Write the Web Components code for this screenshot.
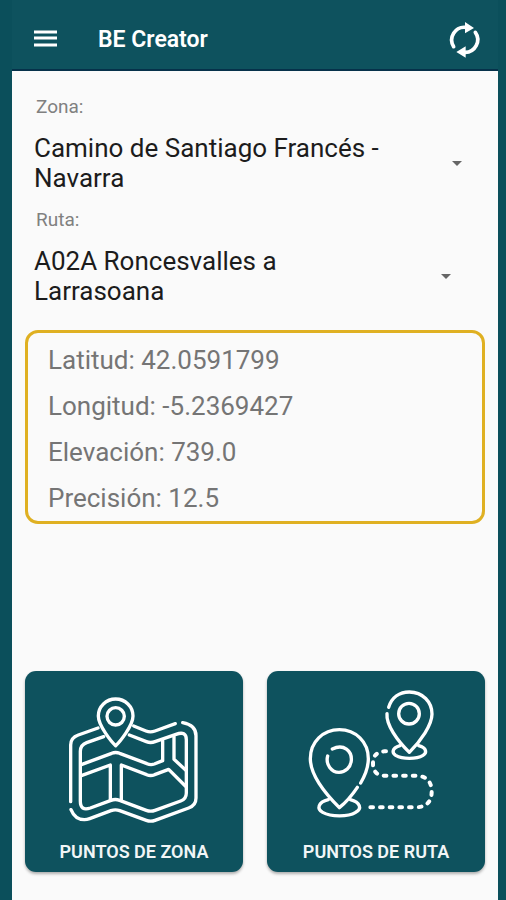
<!DOCTYPE html>
<html lang="es">
<head>
<meta charset="utf-8">
<meta name="viewport" content="width=device-width, initial-scale=1">
<title>BE Creator</title>
<style>
    body {
        margin: 0;
        background: #0b4f5b;
        font-family: Roboto, "Noto Sans", sans-serif;
    }
</style>
</head>
<body>
<app-shell>
    <app-bar slot="bar" heading="BE Creator"></app-bar>
    <select-field label="Zona:">
        <option>Camino de Santiago Francés - Navarra</option>
    </select-field>
    <select-field label="Ruta:" narrow>
        <option>A02A Roncesvalles a Larrasoana</option>
    </select-field>
    <location-card>
        <div>Latitud: 42.0591799</div>
        <div>Longitud: -5.2369427</div>
        <div>Elevación: 739.0</div>
        <div>Precisión: 12.5</div>
    </location-card>
    <tile-button slot="actions">
        <svg slot="icon" viewBox="147 85 423 423" fill="none" stroke="#fff" stroke-width="10" stroke-linecap="round" stroke-linejoin="round" aria-hidden="true">
            <path d="M302 258C290 247 250 198 250 169A52 51 0 0 1 354 169C354 198 314 247 302 258Z"/>
            <circle cx="302" cy="170" r="26"/>
            <path d="M249 205L190 226Q167 234 167 256V426"/>
            <path d="M168 450Q180 480 208 480Q216 480 224 477L288 453Q301 448 314 453L394 482Q407 487 420 482L521 445Q543 437 543 415V228Q543 196 503 189"/>
            <path d="M356 199L393 214Q406 219 420 214L481 192"/>
            <path d="M266 231L215 249Q196 256 196 275V425Q196 455 226 445L288 422Q301 417 314 422L394 452Q407 457 420 452L497 424Q514 418 514 400V240Q514 213 483 224L420 246Q407 251 394 246L343 226"/>
            <path d="M199 315L290 281Q302 276 314 281L396 312Q407 317 418 313L443 303V243"/>
            <path d="M477 231V299L511 330"/>
            <path d="M199 348L286 316V420M319 420V316L395 345Q407 350 419 345L461 329L511 379"/>
        </svg>
        PUNTOS DE ZONA
    </tile-button>
    <tile-button slot="actions">
        <svg slot="icon" viewBox="153 85 423 423" fill="none" stroke="#fff" stroke-width="10" stroke-linecap="round" stroke-linejoin="round" aria-hidden="true">
            <path d="M401 143C410 113 434 97 463 97C503 97 531 127 531 163C531 196 497 244 463 278C426 242 393 195 396 162"/>
            <circle cx="462" cy="162" r="31"/>
            <path d="M435 258C409 266 411 280 422 287C443 299 484 299 504 287C516 280 516 265 491 258"/>
            <path d="M307 383C291 407 273 428 253 444C211 402 166 349 166 297C166 247 204 210 253 210C302 210 340 247 340 297C340 323 331 346 317 370"/>
            <path d="M232 268C267 251 291 275 289 302C287 324 271 338 252 338C230 338 211 315 218 289"/>
            <path d="M220 420C188 428 185 448 203 458C228 472 279 472 302 458C322 447 316 428 286 420"/>
            <path d="M393 275H388Q354 277 354 311Q354 347 388 348H484Q530 350 530 396Q530 441 484 443H337" stroke-dasharray="8 21" stroke-width="12"/>
        </svg>
        PUNTOS DE RUTA
    </tile-button>
</app-shell>

<script>
class AppShell extends HTMLElement {
    constructor() {
        super();
        this.attachShadow({ mode: 'open' });
        this.shadowRoot.innerHTML = `
            <slot name="bar"></slot>
            <main>
                <slot></slot>
                <div class="actions"><slot name="actions"></slot></div>
            </main>

            <style>
            :host {
                display: flex;
                flex-direction: column;
                box-sizing: border-box;
                min-height: 100vh;
                padding: 0 8px 0 12px;
            }

            main {
                flex: 1;
                display: flex;
                flex-direction: column;
                padding: 24px 13px 28px;
                background: #fafafa;
            }

            .actions {
                display: grid;
                grid-template-columns: 1fr 1fr;
                gap: 24px;
                margin-top: auto;
                padding-top: 24px;
            }
            </style>
        `;
    }
}

class AppBar extends HTMLElement {
    constructor() {
        super();
        this.attachShadow({ mode: 'open' });
        this.shadowRoot.innerHTML = `
            <header>
                <button type="button" aria-label="Menú">
                    <svg width="24" height="24" viewBox="0 0 24 24" aria-hidden="true">
                        <path d="M0 4h23M0 10h23M0 17h23" stroke="#fff" stroke-width="3"/>
                    </svg>
                </button>
                <h1></h1>
                <button type="button" aria-label="Actualizar">
                    <svg width="36" height="36" viewBox="20 18 108 108" aria-hidden="true">
                        <path d="M40 92A38 38 0 0 1 76 34M105 49A38 38 0 0 1 73 109" fill="none" stroke="#fff" stroke-width="11" stroke-linecap="round"/>
                        <path d="M74 18L101 36L74 52ZM76 91L48 108L76 125Z" fill="#fff"/>
                    </svg>
                </button>
            </header>

            <style>
            :host {
                display: block;
                background: #0e525e;
                border-bottom: 2px solid #06314a;
            }

            header {
                display: flex;
                align-items: center;
                height: 59px;
                padding: 10px 15px 0 22px;
            }

            h1 {
                flex: 1;
                margin: 0 0 0 40px;
                color: #fff;
                font-size: 23px;
                font-weight: 600;
                line-height: 30px;
            }

            button {
                display: flex;
                padding: 0;
                border: 0;
                background: none;
            }
            </style>
        `;
    }

    connectedCallback() {
        this.shadowRoot.querySelector('h1').textContent = this.getAttribute('heading');
    }
}

class SelectField extends HTMLElement {
    constructor() {
        super();
        this.attachShadow({ mode: 'open' });
        this.shadowRoot.innerHTML = `
            <label for="choice"></label>
            <div class="field">
                <span class="value" aria-hidden="true"></span>
                <i></i>
                <select id="choice"></select>
            </div>

            <style>
            :host {
                display: block;
                padding: 0 23px 0 9px;
            }

            :host([narrow]) {
                padding-right: 34px;
            }

            label {
                display: block;
                padding-left: 2px;
                color: #808080;
                font-size: 19px;
                line-height: 24px;
            }

            .field {
                position: relative;
                display: flex;
                align-items: center;
                justify-content: space-between;
                padding: 14px 0 15px;
            }

            .value {
                max-width: 370px;
                color: #1c1c1c;
                font-size: 26px;
                line-height: 30px;
            }

            i {
                border: 5px solid transparent;
                border-top-color: #666;
                border-bottom: 0;
            }

            /* a native select keeps its value on one line, so it lies
               unseen over the wrapped copy and takes the clicks */
            select {
                position: absolute;
                inset: 0;
                width: 100%;
                opacity: 0;
                font: inherit;
            }
            </style>
        `;
    }

    connectedCallback() {
        const select = this.shadowRoot.querySelector('select');
        const value = this.shadowRoot.querySelector('.value');
        this.shadowRoot.querySelector('label').textContent = this.getAttribute('label');
        select.append(...this.querySelectorAll('option'));

        const update = () => {
            value.textContent = select.value;
        };
        select.addEventListener('change', update);
        update();
    }
}

class LocationCard extends HTMLElement {
    constructor() {
        super();
        this.attachShadow({ mode: 'open' });
        this.shadowRoot.innerHTML = `
            <slot></slot>

            <style>
            :host {
                display: block;
                margin-top: 9px;
                padding: 4px 20px 0;
                border: 3px solid #dfb022;
                border-radius: 13px;
                color: #757575;
                font-size: 26px;
                line-height: 46px;
            }
            </style>
        `;
    }
}

class TileButton extends HTMLElement {
    constructor() {
        super();
        this.attachShadow({ mode: 'open' });
        this.shadowRoot.innerHTML = `
            <button type="button">
                <slot name="icon"></slot>
                <span><slot></slot></span>
            </button>

            <style>
            :host {
                display: block;
            }

            button {
                display: flex;
                flex-direction: column;
                align-items: center;
                gap: 11px;
                width: 100%;
                padding: 17px 8px 8px;
                border: 0;
                border-radius: 11px;
                background: #0e525e;
                box-shadow: 0 2px 3px rgba(0, 0, 0, 0.3);
                color: #f2f6f7;
                font: 600 18px/24px Roboto, "Noto Sans", sans-serif;
            }

            ::slotted(svg) {
                width: 141px;
                height: 141px;
            }
            </style>
        `;
    }
}

customElements.define('app-shell', AppShell);
customElements.define('app-bar', AppBar);
customElements.define('select-field', SelectField);
customElements.define('location-card', LocationCard);
customElements.define('tile-button', TileButton);
</script>
</body>
</html>
